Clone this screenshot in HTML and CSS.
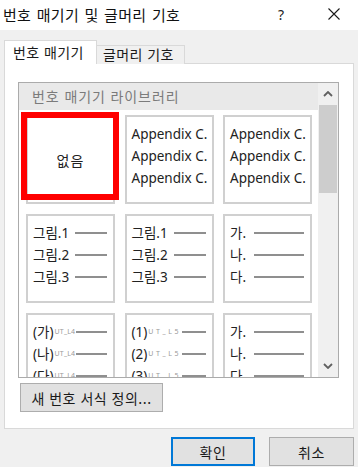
FILE: index.html
```html
<!DOCTYPE html>
<html lang="ko">
<head>
<meta charset="utf-8">
<title>번호 매기기 및 글머리 기호</title>
<link rel="stylesheet" href="styles.css">
</head>
<body>
<div class="dialog">
  <div class="titlebar">
    <span class="title">번호 매기기 및 글머리 기호</span>
    <span class="help">?</span>
    <svg class="close" width="12" height="12" viewBox="0 0 12 12"><path d="M0.5 0.5 L11.5 11.5 M11.5 0.5 L0.5 11.5" stroke="#1a1a1a" stroke-width="1.1" fill="none"/></svg>
  </div>
  <div class="content">
    <div class="tabs">
      <div class="tab active">번호 매기기</div>
      <div class="tab">글머리 기호</div>
    </div>
    <div class="panel">
      <div class="gallery">
        <div class="gallery-main">
          <div class="gallery-header">번호 매기기 라이브러리</div>
          <div class="grid">
            <div class="cell cell-none">
              <span>없음</span>
              <div class="highlight"></div>
            </div>
            <div class="cell">
              <div class="row">Appendix C.</div>
              <div class="row">Appendix C.</div>
              <div class="row">Appendix C.</div>
            </div>
            <div class="cell">
              <div class="row">Appendix C.</div>
              <div class="row">Appendix C.</div>
              <div class="row">Appendix C.</div>
            </div>
            <div class="cell">
              <div class="row">그림.1<i class="rule"></i></div>
              <div class="row">그림.2<i class="rule"></i></div>
              <div class="row">그림.3<i class="rule"></i></div>
            </div>
            <div class="cell">
              <div class="row">그림.1<i class="rule"></i></div>
              <div class="row">그림.2<i class="rule"></i></div>
              <div class="row">그림.3<i class="rule"></i></div>
            </div>
            <div class="cell">
              <div class="row">가.<i class="rule wide"></i></div>
              <div class="row">나.<i class="rule wide"></i></div>
              <div class="row">다.<i class="rule wide"></i></div>
            </div>
            <div class="cell">
              <div class="row">(가)<small>UT_L4</small><i class="rule tight"></i></div>
              <div class="row">(나)<small>UT_L4</small><i class="rule tight"></i></div>
              <div class="row">(다)<small>UT_L4</small><i class="rule tight"></i></div>
            </div>
            <div class="cell">
              <div class="row">(1)<small class="long">UT_L5</small><i class="rule tight"></i></div>
              <div class="row">(2)<small class="long">UT_L5</small><i class="rule tight"></i></div>
              <div class="row">(3)<small class="long">UT_L5</small><i class="rule tight"></i></div>
            </div>
            <div class="cell">
              <div class="row">가.<i class="rule wide"></i></div>
              <div class="row">나.<i class="rule wide"></i></div>
              <div class="row">다.<i class="rule wide"></i></div>
            </div>
          </div>
        </div>
        <div class="scrollbar">
          <div class="arrow">
            <svg width="10" height="6" viewBox="0 0 10 6"><path d="M1 5 L5 1 L9 5" stroke="#606060" stroke-width="1.8" fill="none"/></svg>
          </div>
          <div class="thumb"></div>
          <div class="track"></div>
          <div class="arrow">
            <svg width="10" height="6" viewBox="0 0 10 6"><path d="M1 1 L5 5 L9 1" stroke="#606060" stroke-width="1.8" fill="none"/></svg>
          </div>
        </div>
      </div>
      <button class="btn define">새 번호 서식 정의...</button>
    </div>
    <div class="actions">
      <button class="btn primary">확인</button>
      <button class="btn">취소</button>
    </div>
  </div>
</div>
</body>
</html>
```

FILE: styles.css
```css
* { box-sizing: border-box; }

html, body {
  margin: 0;
  padding: 0;
}

body {
  width: 358px;
  height: 467px;
  overflow: hidden;
  background: #f0f0f0;
  font-family: "Noto Sans", "Noto Sans CJK KR", sans-serif;
  color: #1a1a1a;
}

.dialog {
  width: 358px;
  height: 467px;
  display: flex;
  flex-direction: column;
}

.titlebar {
  height: 30px;
  background: #ffffff;
  display: flex;
  align-items: center;
  padding: 0 18px 2px 3px;
}

.title {
  font-family: "Noto Sans CJK KR", sans-serif;
  font-size: 15px;
  letter-spacing: 0.3px;
  word-spacing: 1px;
  color: #111;
}

.help {
  margin-left: auto;
  font-size: 14px;
  color: #222;
  margin-right: 44px;
}

.close { display: block; }

.content {
  flex: 1;
  padding: 10px 5px 0 4px;
  display: flex;
  flex-direction: column;
}

.tabs {
  display: flex;
  align-items: flex-end;
  height: 24px;
  margin-bottom: -1px;
  position: relative;
  z-index: 1;
}

.tab {
  font-family: "Noto Sans CJK KR", sans-serif;
  font-size: 14px;
  letter-spacing: 0.4px;
  color: #1a1a1a;
  height: 19px;
  line-height: 17px;
  width: 88px;
  padding-left: 6px;
  border: 1px solid #d9d9d9;
  border-left: none;
  border-bottom: none;
  background: #f0f0f0;
}

.tab.active {
  height: 24px;
  width: 93px;
  line-height: 23px;
  padding-left: 8px;
  background: #ffffff;
  border-left: 1px solid #d9d9d9;
}

.panel {
  height: 366px;
  margin-right: -1px;
  background: #ffffff;
  border: 1px solid #d9d9d9;
  padding: 18px 0 0 13px;
}

.gallery {
  width: 321px;
  height: 296px;
  border: 1px solid #ababab;
  display: flex;
}

.gallery-main {
  width: 299px;
  display: flex;
  flex-direction: column;
  overflow: hidden;
}

.gallery-header {
  height: 27px;
  line-height: 27px;
  background: #e9e9e9;
  color: #7b7b7b;
  font-family: "Noto Sans CJK KR", sans-serif;
  font-size: 14px;
  letter-spacing: 0.9px;
  padding-left: 13px;
}

.grid {
  flex: 1;
  overflow: hidden;
  padding: 5px 0 0 7px;
  display: grid;
  grid-template-columns: repeat(3, 89px);
  grid-auto-rows: 89px;
  column-gap: 9.5px;
  row-gap: 10px;
}

.cell {
  position: relative;
  border: 2px solid #d0d0d0;
  background: #fff;
  padding: 6px 6px 0 5px;
  font-size: 13.5px;
  color: #222;
}

.row {
  height: 22px;
  line-height: 22px;
  display: flex;
  align-items: center;
  white-space: nowrap;
}

.rule {
  flex: 1;
  height: 2px;
  background: #8f8f8f;
  margin-left: 6px;
}

.rule.wide { margin-left: 8px; }
.rule.tight { margin-left: 1px; }

small {
  font-size: 7px;
  color: #9a9a9a;
  margin-left: 1px;
  letter-spacing: 0.2px;
}

small.long { letter-spacing: 2.6px; }

.cell-none {
  display: flex;
  align-items: center;
  justify-content: center;
  padding: 0;
  font-family: "Noto Sans CJK KR", sans-serif;
  font-size: 14px;
  letter-spacing: 1px;
}

.highlight {
  position: absolute;
  left: -7px;
  top: -5px;
  width: 98px;
  height: 88px;
  border: 6px solid #ff0000;
}

.scrollbar {
  width: 20px;
  background: #f0f0f0;
  display: flex;
  flex-direction: column;
  align-items: center;
}

.arrow {
  height: 22px;
  width: 100%;
  display: flex;
  align-items: center;
  justify-content: center;
}

.thumb {
  width: 18px;
  height: 88px;
  background: #cdcdcd;
}

.track { flex: 1; }

.btn {
  font-family: "Noto Sans CJK KR", sans-serif;
  font-size: 14px;
  letter-spacing: 0.5px;
  color: #1a1a1a;
  background: #e1e1e1;
  border: 1px solid #adadad;
  height: 29px;
  padding: 0;
  line-height: 26px;
}

.define {
  display: block;
  margin: 5px 0 0 2px;
  width: 143px;
}

.actions {
  margin-top: 8px;
  display: flex;
  justify-content: flex-end;
  gap: 14px;
  margin-right: -1px;
}

.actions .btn { width: 85px; }

.actions .primary {
  width: 84px;
  border: 2px solid #0078d7;
}
```
